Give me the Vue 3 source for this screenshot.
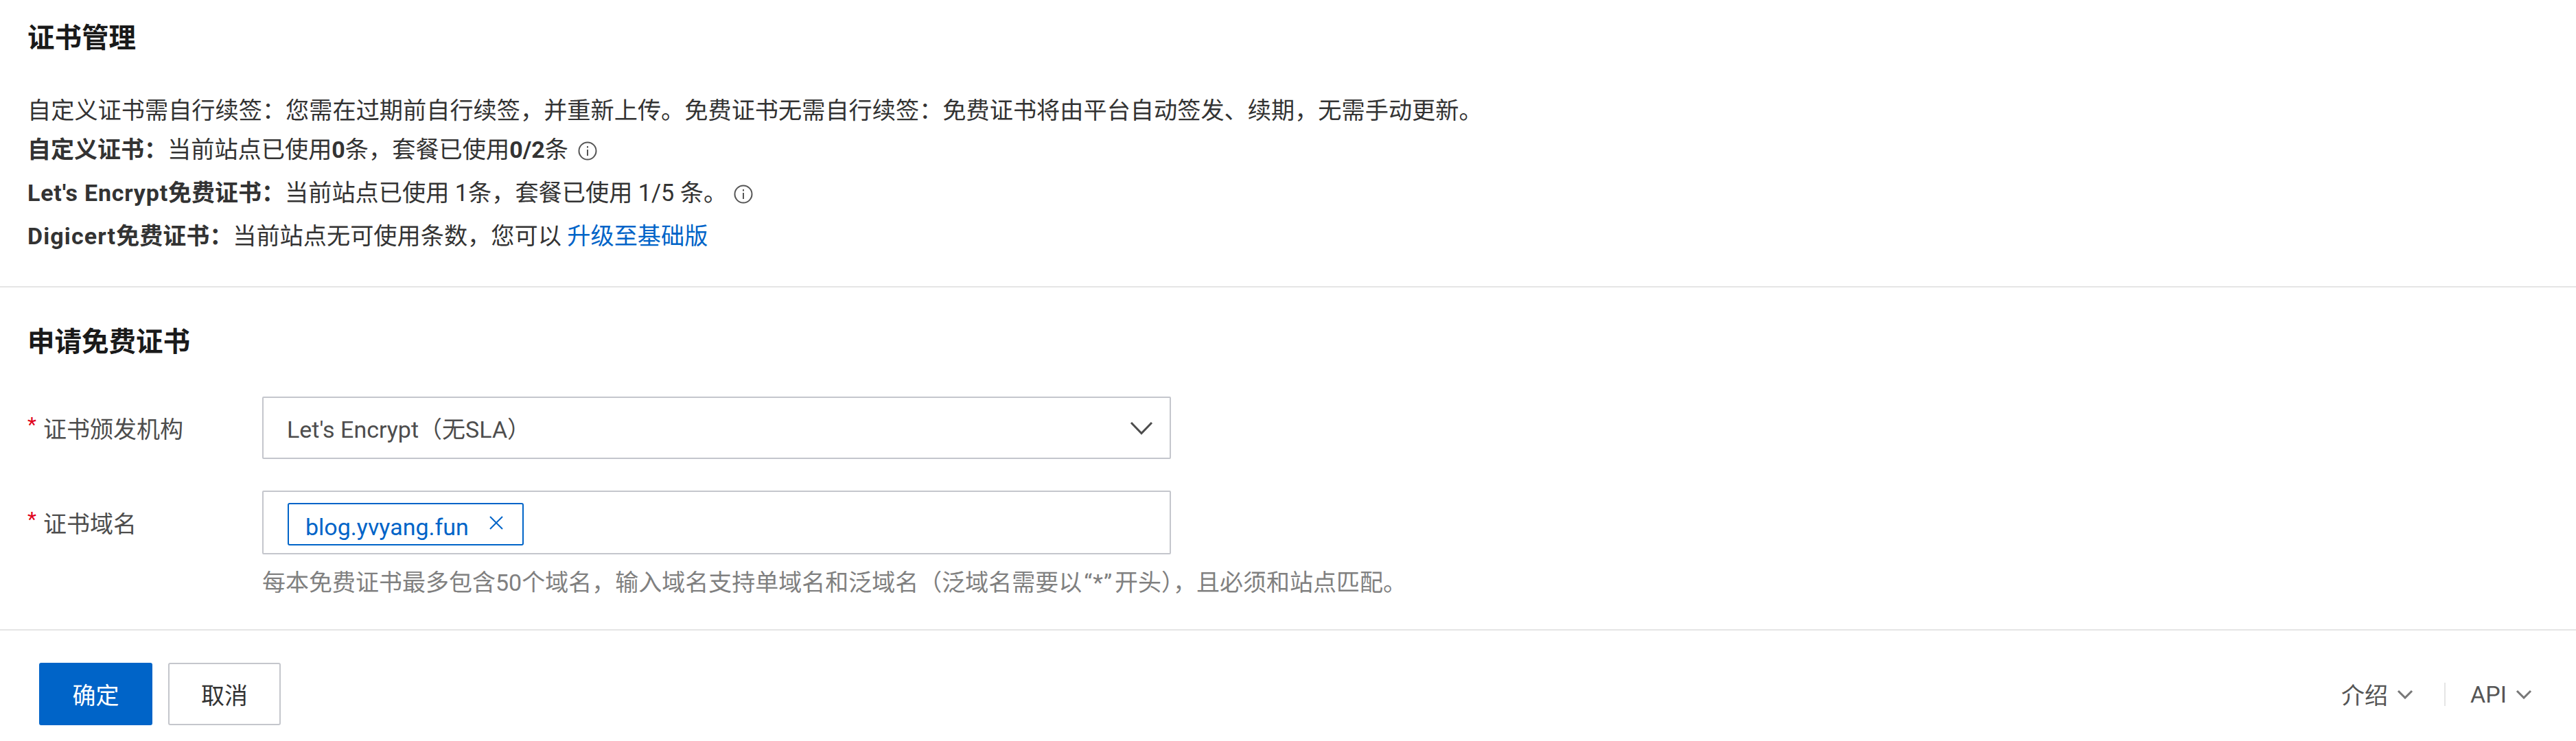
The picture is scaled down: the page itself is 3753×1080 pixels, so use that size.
<script setup>
const fields = [
  { label: '证书颁发机构' },
  { label: '证书域名' },
]
</script>

<template>
  <main class="page">
    <section class="intro">
      <h1 class="heading">证书管理</h1>
      <div class="info">
        <p class="line first">自定义证书需自行续签&#xFF1A;您需在过期前自行续签&#xFF0C;并重新上传。免费证书无需自行续签&#xFF1A;免费证书将由平台自动签发、续期&#xFF0C;无需手动更新。</p>
        <p class="line">
          <b>自定义证书&#xFF1A;</b>当前站点已使用<b>0</b>条&#xFF0C;套餐已使用<b>0/2</b>条<svg class="info-icon near" viewBox="0 0 30 30" fill="none">
            <circle cx="15" cy="15" r="12.5" />
            <path d="M15 13v9M15 8v2.6" />
          </svg>
        </p>
        <p class="line">
          <b><span class="latin">Let's Encrypt</span>免费证书&#xFF1A;</b>当前站点已使用 1条&#xFF0C;套餐已使用 1/5 条。<svg class="info-icon" viewBox="0 0 30 30" fill="none">
            <circle cx="15" cy="15" r="12.5" />
            <path d="M15 13v9M15 8v2.6" />
          </svg>
        </p>
        <p class="line">
          <b><span class="latin wide">Digicert</span>免费证书&#xFF1A;</b>当前站点无可使用条数&#xFF0C;您可以 <a class="link">升级至基础版</a>
        </p>
      </div>
    </section>

    <section class="apply">
      <h2 class="heading">申请免费证书</h2>
      <div class="form">
        <label class="label"><i class="star">*</i>{{ fields[0].label }}</label>
        <div class="control select">
          <span>Let's Encrypt&#xFF08;无SLA&#xFF09;</span>
          <svg class="select-arrow" viewBox="0 0 34 20" fill="none">
            <path d="M2 2l15 15.5L32 2" />
          </svg>
        </div>

        <label class="label second"><i class="star">*</i>{{ fields[1].label }}</label>
        <div class="control tags">
          <span class="tag">
            blog.yvyang.fun
            <svg class="tag-close" viewBox="0 0 22 22" fill="none">
              <path d="M2 2l18 18M20 2L2 20" />
            </svg>
          </span>
        </div>

        <p class="hint">每本免费证书最多包含50个域名&#xFF0C;输入域名支持单域名和泛域名&#xFF08;泛域名需要以<span class="quoted">“*”</span>开头&#xFF09;&#xFF0C;且必须和站点匹配。</p>
      </div>
    </section>

    <footer class="footer">
      <div class="actions">
        <button class="btn primary">确定</button>
        <button class="btn">取消</button>
      </div>
      <nav class="nav">
        <a class="nav-item">
          介绍
          <svg class="nav-arrow" viewBox="0 0 24 14" fill="none"><path d="M2 2l10 10L22 2" /></svg>
        </a>
        <span class="nav-sep"></span>
        <a class="nav-item">
          API
          <svg class="nav-arrow" viewBox="0 0 24 14" fill="none"><path d="M2 2l10 10L22 2" /></svg>
        </a>
      </nav>
    </footer>
  </main>
</template>

<style>
html, body { background: #fff; }
</style>

<style scoped>
.page {
  width: 3753px;
  height: 1080px;
  overflow: hidden;
  background: #fff;
  color: #333;
  font-family: Roboto, "Noto Sans CJK SC", "Liberation Sans", sans-serif;
  font-size: 34px;
}
.heading {
  margin: 0;
  height: 40px;
  font-size: 39.5px;
  line-height: 40px;
  font-weight: 700;
  color: #1a1a1a;
}
.intro {
  padding: 36px 40px 41px;
  border-bottom: 2px solid #e5e5e5;
}
.info { margin-top: 60px; }
.line {
  margin: 0;
  height: 63px;
  line-height: 63px;
  font-size: 34.2px;
  white-space: nowrap;
  display: block;
}
.line.first { height: 51px; line-height: 51px; }
.line b { font-weight: 700; font-size: 34px; }
.latin { letter-spacing: 0.8px; }
.latin.wide { letter-spacing: 1.1px; }
.quoted { margin: 0 3px; letter-spacing: 1px; }
.info-icon {
  width: 30px;
  height: 30px;
  vertical-align: -5px;
  margin-left: 9px;
}
.info-icon.near { margin-left: 13px; }
.info-icon circle, .info-icon path {
  stroke: #555;
  stroke-width: 2;
}
.link { color: #0064c8; }

.apply {
  padding: 60px 0 43px 40px;
  border-bottom: 2px solid #e5e5e5;
}
.form {
  display: grid;
  grid-template-columns: 342px 1324px;
  margin-top: 59px;
}
.label {
  display: flex;
  align-items: center;
  height: 91px;
  color: #4d4d4d;
}
.label.second { height: 93px; margin-top: 46px; }
.star {
  width: 23px;
  color: #e0001b;
  font-style: normal;
  font-size: 30px;
  margin-top: -10px;
}
.control {
  box-sizing: border-box;
  border: 2px solid #c4c6cc;
  border-radius: 2px;
}
.select {
  height: 91px;
  display: flex;
  align-items: center;
  justify-content: space-between;
  padding: 0 24px 0 34px;
  color: #4d4d4d;
}
.select-arrow {
  width: 34px;
  height: 20px;
}
.select-arrow path {
  stroke: #4d4d4d;
  stroke-width: 3;
}
.tags {
  height: 93px;
  margin-top: 46px;
  padding: 16px 0 0 35px;
}
.tag {
  box-sizing: border-box;
  display: inline-flex;
  align-items: center;
  height: 62px;
  width: 344px;
  padding: 7px 0 0 24px;
  border: 2px solid #0064c8;
  border-radius: 3px;
  color: #0064c8;
  white-space: nowrap;
}
.tag-close {
  width: 22px;
  height: 22px;
  margin: -11px 0 0 29px;
}
.tag-close path {
  stroke: #0064c8;
  stroke-width: 2;
}
.hint {
  grid-column: 2;
  margin: 16px 0 0;
  height: 50px;
  line-height: 50px;
  color: #808080;
  white-space: nowrap;
}

.footer {
  display: flex;
  align-items: center;
  justify-content: space-between;
  padding: 47px 64px 0 57px;
}
.actions {
  display: flex;
  gap: 23px;
}
.btn {
  box-sizing: border-box;
  width: 164px;
  height: 91px;
  padding: 0;
  border: 2px solid #c4c6cc;
  border-radius: 3px;
  background: #fff;
  color: #333;
  font: inherit;
}
.btn.primary {
  width: 165px;
  border-color: #0064c8;
  background: #0064c8;
  color: #fff;
}
.nav {
  display: flex;
  align-items: center;
}
.nav-item {
  display: flex;
  align-items: center;
  gap: 13px;
  color: #555;
}
.nav-arrow {
  width: 24px;
  height: 14px;
}
.nav-arrow path {
  stroke: #777;
  stroke-width: 3;
}
.nav-sep {
  width: 2px;
  height: 34px;
  margin: 0 36px 0 45px;
  background: #e5e5e5;
}
</style>
